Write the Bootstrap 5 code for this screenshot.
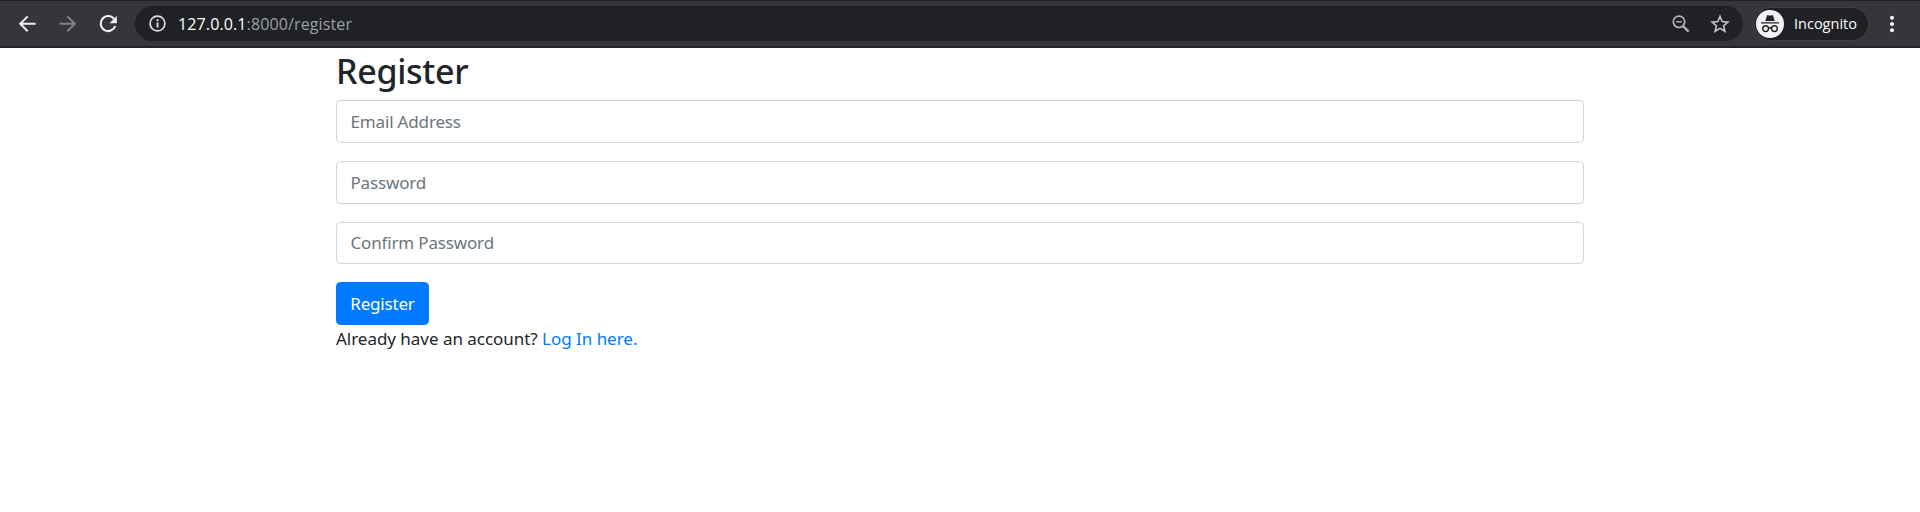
<!DOCTYPE html>
<html lang="en">
<head>
<meta charset="utf-8">
<meta name="viewport" content="width=device-width, initial-scale=1">
<title>Register</title>
<link href="https://cdn.jsdelivr.net/npm/bootstrap@5.3.0/dist/css/bootstrap.min.css" rel="stylesheet">
<style>
  html { font-size: 18px; }
  body { font-family: "Noto Sans", "Open Sans", sans-serif; font-size: 17px; line-height: 27px; color: #212529; background: #fff; overflow: hidden; }
  .toolbar { height: 48px; background: #35363a; border-top: 1px solid #202124; border-bottom: 2px solid #242426; padding: 0 17px 0 16px; font-family: "Open Sans", "Noto Sans", sans-serif; }
  .toolbar svg { display: block; flex: none; }
  .tool-back { margin-right: 16px; }
  .tool-next { margin-right: 16px; }
  .tool-reload { margin-right: 15px; }
  .omnibox { height: 35px; background: #202124; padding: 0 13px 0 11px; margin-right: 11px; }
  .address { font-size: 16px; letter-spacing: .12px; line-height: 24px; color: #9aa0a6; margin-left: 9px; }
  .address b { color: #fff; font-weight: 400; }
  .incognito { width: 115px; height: 34px; background: #202124; border: 1px solid #3f4044; padding-left: 1px; margin-right: 12px; color: #fff; font-size: 14.5px; }
  .incog-label { margin-left: 10px; }
  .page { width: 1248px; }
  .page h2 { font-size: 34px; line-height: 43px; letter-spacing: -.3px; font-weight: 500; padding-top: 2px; margin-bottom: 7px; }
  .page .form-control { height: 42.75px; border-color: #ced4da; border-radius: 4.5px; padding: 0 13.5px; font-size: 17px; letter-spacing: -.16px; }
  .page .form-control::placeholder { color: #6c757d; opacity: 1; }
  .page .btn { height: 42.75px; width: 93px; padding: 0; font-size: 17px; letter-spacing: -.2px; border-radius: 4.5px; background: #007bff; border-color: #007bff; }
  .page a { color: #007bff; }
  .login-line { letter-spacing: -.03px; }
</style>
</head>
<body>
<header class="toolbar d-flex align-items-center">
  <svg class="tool-back" width="24" height="24" viewBox="0 0 24 24" fill="none" stroke="#f1f3f4" stroke-width="2"><path d="M19.5 11.8H5M11.7 4.4 4.2 11.8l7.5 7.5"/></svg>
  <svg class="tool-next" width="24" height="24" viewBox="0 0 24 24" fill="none" stroke="#7f8184" stroke-width="2"><path d="M3.5 11.8H18M11.3 4.4l7.5 7.4-7.5 7.5"/></svg>
  <svg class="tool-reload" width="24" height="24" viewBox="0 0 24 24"><path d="M18 6.8A7.5 7.5 0 1 0 19.3 14" fill="none" stroke="#f1f3f4" stroke-width="2.1"/><path d="M20.8 4v7.3h-7.3z" fill="#f1f3f4"/></svg>
  <div class="omnibox rounded-pill d-flex align-items-center flex-grow-1">
    <svg width="23" height="23" viewBox="0 0 23 23"><circle cx="11.5" cy="11.5" r="7.4" fill="none" stroke="#dfe1e5" stroke-width="1.7"/><path d="M10.6 7.3h1.9v1.9h-1.9zM10.6 10.4h1.9v5.2h-1.9z" fill="#dfe1e5"/></svg>
    <div class="address"><b>127.0.0.1</b>:8000/register</div>
    <svg class="ms-auto me-3" width="22" height="22" viewBox="0 0 22 22" fill="none" stroke="#b5b7ba"><circle cx="9" cy="8.8" r="5.7" stroke-width="1.7"/><path d="m13 13 5.6 5.6" stroke-width="2.2"/><path d="M6.2 8.8h5.6" stroke-width="1.4"/></svg>
    <svg width="20" height="20" viewBox="0 0 20 20" fill="none" stroke="#c0c2c5" stroke-width="1.6"><path d="m10 2.4 2.2 5.2 5.7.5-4.3 3.7 1.3 5.5-4.9-2.9-4.9 2.9 1.3-5.5-4.3-3.7 5.7-.5z"/></svg>
  </div>
  <div class="incognito rounded-pill d-flex align-items-center">
    <svg width="28" height="28" viewBox="0 0 28 28"><circle cx="14" cy="14" r="14" fill="#f1f3f4"/><path d="M9.2 11 11 5.7q.3-.9 1.2-.5l1.8.6 1.8-.6q.9-.4 1.2.5l1.8 5.3zM5 12.2h18v1.3H5z" fill="#202124"/><g fill="none" stroke="#202124" stroke-width="1.4"><circle cx="9.6" cy="18.6" r="2.9"/><circle cx="18.4" cy="18.6" r="2.9"/><path d="M12.4 18.2q1.6-.9 3.2 0"/></g></svg>
    <span class="incog-label">Incognito</span>
  </div>
  <svg width="22" height="22" viewBox="0 0 22 22" fill="#f1f3f4"><circle cx="11" cy="4.7" r="2"/><circle cx="11" cy="11" r="2"/><circle cx="11" cy="17.3" r="2"/></svg>
</header>
<main class="page mx-auto">
  <h2>Register</h2>
  <form>
    <div class="mb-3"><input class="form-control" type="email" placeholder="Email Address"></div>
    <div class="mb-3"><input class="form-control" type="password" placeholder="Password"></div>
    <div class="mb-3"><input class="form-control" type="password" placeholder="Confirm Password"></div>
    <button class="btn btn-primary d-block" type="button">Register</button>
  </form>
  <div class="login-line">Already have an account? <a class="text-decoration-none" href="#">Log In here.</a></div>
</main>
<script src="https://cdn.jsdelivr.net/npm/bootstrap@5.3.0/dist/js/bootstrap.bundle.min.js"></script>
</body>
</html>
